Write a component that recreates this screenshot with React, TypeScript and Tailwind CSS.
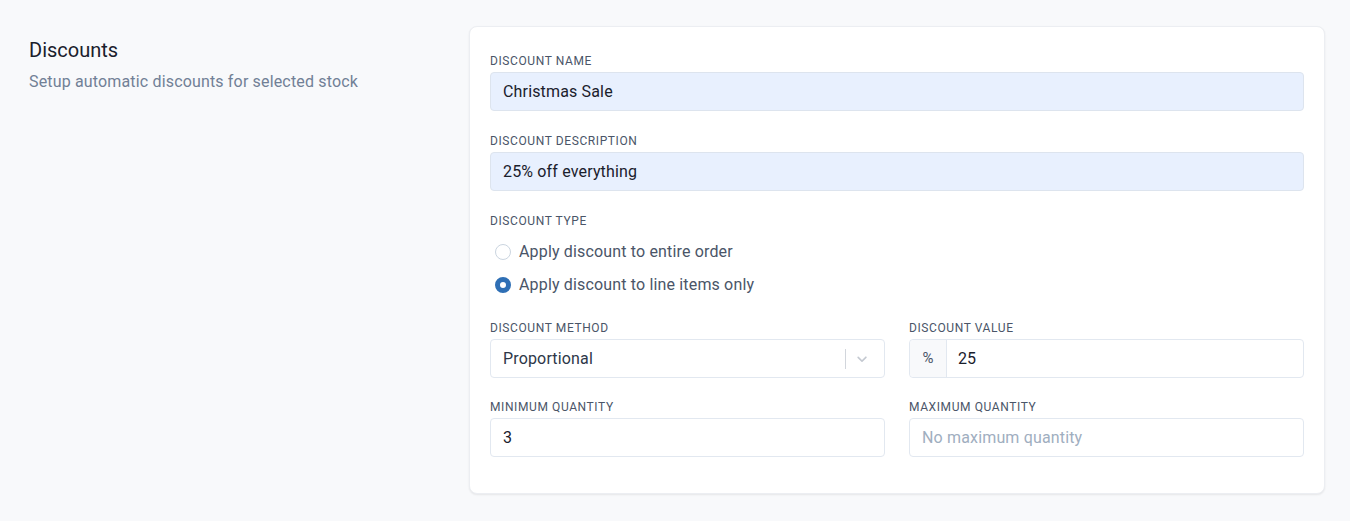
const font = { fontFamily: 'Roboto, "Noto Sans", sans-serif' }

function Label({ children }: { children: string }) {
  return (
    <div className="text-[12px] leading-4 tracking-[0.05em] uppercase text-[#4a5568]">
      {children}
    </div>
  )
}

function Radio({ checked, label }: { checked?: boolean; label: string }) {
  return (
    <label className="flex items-center h-6 pl-[5px]">
      {checked ? (
        <span className="w-4 h-4 rounded-full border-[5px] border-[#2f6fb5] bg-white" />
      ) : (
        <span className="w-4 h-4 rounded-full border border-[#cbd5e0] bg-white" />
      )}
      <span className="ml-2 text-base tracking-[0.01em] text-[#4a5568]">{label}</span>
    </label>
  )
}

export default function App() {
  return (
    <div className="min-h-[521px] bg-[#f8f9fb] flex" style={font}>
      <div className="w-[469px] pl-[29px] pt-[36px]">
        <h2 className="text-[20px] leading-7 text-[#1a202c]">Discounts</h2>
        <p className="mt-[6px] text-base leading-6 tracking-[0.01em] text-[#718096]">
          Setup automatic discounts for selected stock
        </p>
      </div>
      <div className="mt-[26px] mb-[27px] w-[856px] h-[468px] bg-white border border-[#eceef2] rounded-lg shadow-[0_1px_2px_rgba(0,0,0,0.08)] px-5 pt-[26px]">
        <Label>Discount name</Label>
        <div className="mt-[3px] h-[39px] rounded bg-[#e8f0fe] border border-[#dde4ee] flex items-center px-3 text-base tracking-[0.01em] text-[#1a202c]">
          Christmas Sale
        </div>

        <div className="mt-[22px]">
          <Label>Discount description</Label>
        </div>
        <div className="mt-[3px] h-[39px] rounded bg-[#e8f0fe] border border-[#dde4ee] flex items-center px-3 text-base tracking-[0.01em] text-[#1a202c]">
          25% off everything
        </div>

        <div className="mt-[22px]">
          <Label>Discount type</Label>
        </div>
        <div className="mt-[11px] flex flex-col gap-[9px]">
          <Radio label="Apply discount to entire order" />
          <Radio checked label="Apply discount to line items only" />
        </div>

        <div className="mt-[23px] grid grid-cols-2 gap-x-6">
          <div>
            <Label>Discount method</Label>
            <div className="mt-[3px] h-[39px] rounded border border-[#e2e8f0] flex items-center pl-3 text-base tracking-[0.01em] text-[#2d3748]">
              <span className="flex-1">Proportional</span>
              <span className="w-px h-5 bg-[#d2d6dc]" />
              <svg className="ml-2 mr-[14px]" width="16" height="16" viewBox="0 0 20 20" fill="#c4c9d1">
                <path d="M4.5 7.2a1 1 0 0 1 1.4 0L10 11.3l4.1-4.1a1 1 0 1 1 1.4 1.4l-4.8 4.8a1 1 0 0 1-1.4 0L4.5 8.6a1 1 0 0 1 0-1.4z" />
              </svg>
            </div>
          </div>
          <div>
            <Label>Discount value</Label>
            <div className="mt-[3px] h-[39px] rounded border border-[#e2e8f0] flex text-base">
              <span className="w-[37px] bg-[#f8f9fb] border-r border-[#e2e8f0] rounded-l flex items-center justify-center text-[#4a5568] text-[15px]">
                %
              </span>
              <span className="flex items-center pl-[11px] text-[#1a202c]">25</span>
            </div>
          </div>
          <div className="mt-[21px]">
            <Label>Minimum quantity</Label>
            <div className="mt-[3px] h-[39px] rounded border border-[#e2e8f0] flex items-center px-3 text-base text-[#1a202c]">
              3
            </div>
          </div>
          <div className="mt-[21px]">
            <Label>Maximum quantity</Label>
            <div className="mt-[3px] h-[39px] rounded border border-[#e2e8f0] flex items-center px-3 text-base tracking-[0.01em] text-[#a0aec0]">
              No maximum quantity
            </div>
          </div>
        </div>
      </div>
    </div>
  )
}
